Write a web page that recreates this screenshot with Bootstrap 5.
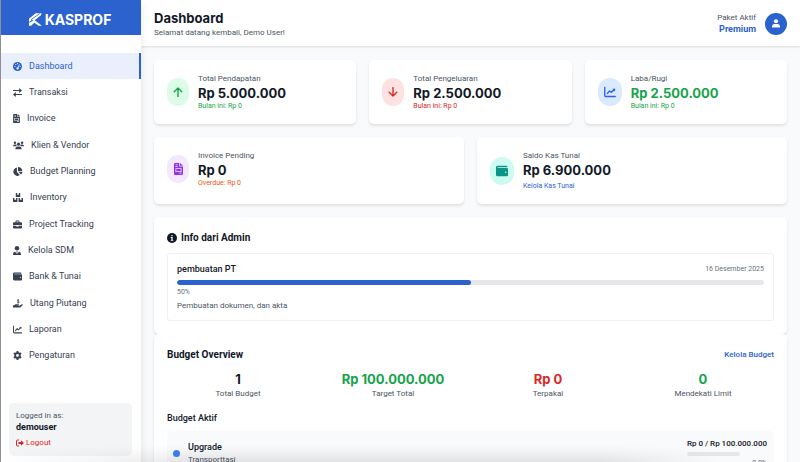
<!DOCTYPE html>
<html lang="id">
<head>
<meta charset="utf-8">
<meta name="viewport" content="width=device-width, initial-scale=1">
<title>KASPROF - Dashboard</title>
<link href="https://cdn.jsdelivr.net/npm/bootstrap@5.3.0/dist/css/bootstrap.min.css" rel="stylesheet">
<style>
:root{--brand:#2c62cd;--ink:#111827;--slate:#374151;--muted:#4b5563;--ok:#16a34a;--bad:#dc2626}
body{font-family:Roboto,"Liberation Sans",sans-serif;font-size:8px;line-height:11px;color:var(--ink);background:#f9fafb}
a{text-decoration:none;color:var(--brand)}
svg{display:block;fill:currentColor;flex:none}
.side{width:141px;border-left:1px solid #8d8f94;box-shadow:0 3px 8px rgba(0,0,0,.1);z-index:2}
.brand,.top h1,.num{font-family:Inter,"Liberation Sans",sans-serif}
.brand{height:35px;padding:4px 2px 0 0;background:var(--brand);color:#fff;font-size:14px;font-weight:700;gap:3px}
.menu{margin-top:18px;height:316px}
.menu li{flex:1 1 0;display:flex}
.menu a{display:flex;flex:1;align-items:center;gap:7px;padding-left:12px;font-size:9px;color:var(--slate);border-right:2px solid transparent}
.menu a.active{background:#eaf0fb;color:var(--brand);border-color:var(--brand)}
.userbox{margin:0 9px 6px 8px;padding:7px 7px 9px;background:#f3f4f6;border-radius:5px}
.userbox .who{font-size:9px;line-height:13px;font-weight:700}
.exit{border:0;background:none;padding:0;color:var(--bad);gap:2px;margin-top:4px;font-size:8px;line-height:9px}
.top{height:46px;padding:1px 13px 0;box-shadow:0 1px 2px rgba(0,0,0,.12)}
.top h1{font-size:13px;line-height:17px;font-weight:700}
.muted{color:var(--muted)}
.plan{font-size:9px;line-height:13px;font-weight:700;color:var(--brand)}
.avatar{width:22px;height:22px;background:var(--brand);color:#fff;border:0;padding:0}
.content{padding:14px 13px 0}
.stack{gap:13px}
.panel{background:#fff;border-radius:5px;padding:13px;box-shadow:0 2px 3px rgba(0,0,0,.1)}
.stat{flex:1 1 0}
.pair{gap:9px}
.bubble{width:22px;height:28px;border-radius:14px}
.bubble.wide{width:24px}
.num{font-size:13px;line-height:18px;font-weight:700}
.tiny{font-size:7px;line-height:9px}
.ok{color:var(--ok)}.bad{color:var(--bad)}.late{color:#ea580c}
.b-green{background:#dcfce7;color:var(--ok)}.b-red{background:#fee2e2;color:var(--bad)}
.b-blue{background:#dbeafe;color:#2563eb}.b-violet{background:#f3e8ff;color:#9333ea}.b-teal{background:#ccfbf1;color:#0d9488}
h2{font-size:10px;line-height:15px;font-weight:700;margin:0}
.note{border:1px solid #eff0f2;border-radius:3px;padding:9px}
.note h3{font-size:9px;line-height:13px;font-weight:500;margin:0}
.progress{--bs-progress-height:5px;--bs-progress-bg:#e5e7eb;--bs-progress-bar-bg:var(--brand);--bs-progress-border-radius:3px}
.gray{color:#6b7280}
.pct{margin-top:3px}
.sub{font-size:9px;line-height:13px;font-weight:500;margin:13px 0 6px}
.item{background:#f9fafb;border-radius:5px;padding:7px 7px 7px 6px}
.dot{width:7px;height:7px;background:#3b82f6}
.mini{width:53px;margin:3px 0;--bs-progress-height:4px}
.fade-edge{left:0;right:0;bottom:0;height:16px;z-index:3;pointer-events:none;background:linear-gradient(to bottom,rgba(0,0,0,0),rgba(0,0,0,.09));-webkit-mask-image:linear-gradient(to right,transparent,#000 25%,#000 75%,transparent 90%);mask-image:linear-gradient(to right,transparent,#000 25%,#000 75%,transparent 90%)}
</style>
<script src="https://cdn.jsdelivr.net/npm/bootstrap@5.3.0/dist/js/bootstrap.bundle.min.js"></script>
</head>
<body>
<svg width="0" height="0" class="position-absolute" aria-hidden="true">
<symbol id="doc" viewBox="0 0 12 16"><path fill-rule="evenodd" d="M1.500 0H7v4.500h5V14.500a1.500 1.500 0 0 1-1.500 1.500h-9A1.500 1.500 0 0 1 0 14.500v-13A1.500 1.500 0 0 1 1.500 0zM2 2v1h3V2zM2 4v1h3V4zM2 7v5h8V7zM3 8h6v3H3zM7 13v1h3v-1zM8 0l4 3.500H8z"/></symbol>
<symbol id="wallet" viewBox="0 0 16 16"><path fill-rule="evenodd" d="M2 1h12a1 1 0 0 1 1 1v1H2.500a.5.5 0 0 0 0 1H14.500A1.500 1.500 0 0 1 16 5.500v8a1.500 1.500 0 0 1-1.500 1.500H2a2 2 0 0 1-2-2V3a2 2 0 0 1 2-2zM13 8.500a1 1 0 1 0 0 2 1 1 0 0 0 0-2z"/></symbol>
<symbol id="chart" viewBox="0 0 16 16"><path d="M1 2v10.500a1.500 1.500 0 0 0 1.500 1.500H15M4.500 10l3-3.500 2 2L14 4.500" fill="none" stroke="currentColor" stroke-width="1.800" stroke-linecap="round" stroke-linejoin="round"/><path d="M11 3.500h3.800v3.800z"/></symbol>
</svg>
<div class="d-flex vh-100 overflow-hidden position-relative">
<aside class="side bg-white d-flex flex-column flex-shrink-0">
<div class="brand d-flex align-items-center justify-content-center">
<svg width="13" height="13" viewBox="0 0 39 39"><path d="M20 1H38L36 7 15 23 9 20 0 27V17zM0 38V29L16 21 39 38H29L16 29 6 38z"/><path d="M6 20L32 2" stroke="#2c62cd" stroke-width="2.500"/></svg>
<span>KASPROF</span>
</div>
<nav aria-label="Menu utama">
<ul class="menu list-unstyled d-flex flex-column mb-0">
<li><a href="#" class="active" aria-current="page"><svg width="9" height="9" viewBox="0 0 16 16"><circle cx="8" cy="8" r="8"/><g fill="#eaf0fb"><circle cx="3.500" cy="8" r="1.100"/><circle cx="5" cy="4.500" r="1.100"/><circle cx="8" cy="3" r="1.100"/><circle cx="12.600" cy="8" r="1.100"/><circle cx="8" cy="11.500" r="2"/><path d="M7.500 11L11 4l1 .5L9 12z"/></g></svg>Dashboard</a></li>
<li><a href="#"><svg width="9" height="9" viewBox="0 0 16 16"><path d="M0 3.500h11V0l5 4.500-5 4.500V5.500H0zM16 12.500H5V16l-5-4.500L5 7v3.500h11z"/></svg>Transaksi</a></li>
<li><a href="#"><svg width="7" height="9"><use href="#doc"/></svg>Invoice</a></li>
<li><a href="#"><svg width="11" height="9" viewBox="0 0 20 16"><circle cx="3.500" cy="3" r="2.200"/><circle cx="16.500" cy="3" r="2.200"/><circle cx="10" cy="5.500" r="2.900"/><path d="M0 9a3 3 0 0 1 3-3h2c.8 0 1 .3 1.200.5 0 1.500.4 2 1 3H0zM20 9a3 3 0 0 0-3-3h-2c-.8 0-1 .3-1.200.5 0 1.500-.4 2-1 3H20zM4 15a5 5 0 0 1 4-5h4a5 5 0 0 1 4 5z"/></svg>Klien &amp; Vendor</a></li>
<li><a href="#"><svg width="10" height="9" viewBox="0 0 18 16"><path d="M7 1v8l5.500 5.500A7.500 7.500 0 1 1 7 1zM9 0a7.500 7.500 0 0 1 7.500 7H9zM9.500 8.500H17a7.500 7.500 0 0 1-2.500 5z"/></svg>Budget Planning</a></li>
<li><a href="#"><svg width="10" height="9" viewBox="0 0 18 16"><path d="M5 0h2.500v3h3V0H13v7H5zM0 9h2.500v3h3V9H8v7H0zM10 9h2.500v3h3V9H18v7h-8z"/></svg>Inventory</a></li>
<li><a href="#"><svg width="9" height="9" viewBox="0 0 16 16"><path fill-rule="evenodd" d="M4.500 4V2.500A1.500 1.500 0 0 1 6 1h4a1.500 1.500 0 0 1 1.500 1.500V4h3A1.500 1.500 0 0 1 16 5.500V9H0V5.500A1.500 1.500 0 0 1 1.500 4zM6 4h4V2.500H6zM0 10h6v1.500h4V10h6v3.500a1.500 1.500 0 0 1-1.500 1.500h-13A1.500 1.500 0 0 1 0 13.500z"/></svg>Project Tracking</a></li>
<li><a href="#"><svg width="8" height="9" viewBox="0 0 14 16"><circle cx="7" cy="4" r="4"/><path d="M0 16v-2a4 4 0 0 1 4-4l2 4 .5-2L6 9.500h2L7.500 12l.5 2 2-4a4 4 0 0 1 4 4v2z"/></svg>Kelola SDM</a></li>
<li><a href="#"><svg width="9" height="9"><use href="#wallet"/></svg>Bank &amp; Tunai</a></li>
<li><a href="#"><svg width="10" height="9" viewBox="0 0 18 16"><path d="M0 11h2.500l2-1.500H10q1.500.8 0 2H7.500v.6h4L16 9.500q2-.4 1.700 1.200L13 15H0z"/><path d="M11 1.800C8 .6 7 2.800 9 3.700s3 1.200 1.500 2.700c-1 .8-2.500 0-3 0M9.200 0v8" fill="none" stroke="currentColor" stroke-width="1.300"/></svg>Utang Piutang</a></li>
<li><a href="#"><svg width="9" height="9"><use href="#chart"/></svg>Laporan</a></li>
<li><a href="#"><svg width="9" height="9" viewBox="0 0 16 16"><path fill-rule="evenodd" d="M6.500 0h3l.5 2.300 1.500.9L13.800 2.500l1.500 2.600L13.600 6.700v2.600l1.700 1.600-1.500 2.600-2.300-.7-1.500.9-.5 2.300h-3L6 13.700l-1.500-.9-2.300.7L.7 10.900l1.700-1.600V6.700L.7 5.100l1.500-2.600 2.300.7L6 2.300zM8 5.500a2.500 2.500 0 1 0 0 5 2.500 2.500 0 0 0 0-5z"/></svg>Pengaturan</a></li>
</ul>
</nav>
<div class="userbox mt-auto">
<div class="muted">Logged in as:</div>
<div class="who">demouser</div>
<button type="button" class="exit d-flex align-items-center"><svg width="8" height="8" viewBox="0 0 16 16"><path d="M6 2H3a2 2 0 0 0-2 2v8a2 2 0 0 0 2 2h3" fill="none" stroke="currentColor" stroke-width="2"/><path d="M5 6h5V2.500L16 8l-6 5.500V10H5z"/></svg>Logout</button>
</div>
</aside>
<div class="flex-grow-1 d-flex flex-column">
<header class="top bg-white d-flex align-items-center justify-content-between flex-shrink-0">
<div><h1 class="mb-0">Dashboard</h1><div class="muted">Selamat datang kembali, Demo User!</div></div>
<div class="d-flex align-items-center pair">
<div class="text-end"><div class="muted">Paket Aktif</div><div class="plan">Premium</div></div>
<button type="button" class="avatar rounded-circle d-flex align-items-center justify-content-center" aria-label="Profil"><svg width="8" height="9" viewBox="0 0 14 16"><circle cx="7" cy="4" r="3.700"/><path d="M0 15v-1.500A4.500 4.500 0 0 1 4.500 9h5a4.500 4.500 0 0 1 4.500 4.500V15z"/></svg></button>
</div>
</header>
<main class="content">
<div class="d-flex flex-column stack">
<div class="d-flex stack">
<section class="panel stat d-flex"><div class="d-flex align-items-center pair"><div class="bubble b-green d-flex align-items-center justify-content-center"><svg width="10" height="10" viewBox="0 0 16 16"><path d="M8 15V2M2 7.500L8 1.500l6 6" fill="none" stroke="currentColor" stroke-width="2.200" stroke-linecap="round" stroke-linejoin="round"/></svg></div><div><div class="muted">Total Pendapatan</div><div class="num">Rp 5.000.000</div><div class="tiny ok">Bulan ini: Rp 0</div></div></div></section>
<section class="panel stat d-flex"><div class="d-flex align-items-center pair"><div class="bubble b-red d-flex align-items-center justify-content-center"><svg width="10" height="10" viewBox="0 0 16 16"><path d="M8 1v13M2 8.500l6 6 6-6" fill="none" stroke="currentColor" stroke-width="2.200" stroke-linecap="round" stroke-linejoin="round"/></svg></div><div><div class="muted">Total Pengeluaran</div><div class="num">Rp 2.500.000</div><div class="tiny bad">Bulan ini: Rp 0</div></div></div></section>
<section class="panel stat d-flex"><div class="d-flex align-items-center pair"><div class="bubble wide b-blue d-flex align-items-center justify-content-center"><svg width="12" height="12"><use href="#chart"/></svg></div><div><div class="muted">Laba/Rugi</div><div class="num ok">Rp 2.500.000</div><div class="tiny ok">Bulan ini: Rp 0</div></div></div></section>
</div>
<div class="d-flex stack">
<section class="panel stat"><div class="d-flex align-items-center pair"><div class="bubble b-violet d-flex align-items-center justify-content-center"><svg width="9" height="12"><use href="#doc"/></svg></div><div><div class="muted">Invoice Pending</div><div class="num">Rp 0</div><div class="tiny late">Overdue: Rp 0</div></div></div></section>
<section class="panel stat"><div class="d-flex align-items-center pair"><div class="bubble wide b-teal d-flex align-items-center justify-content-center"><svg width="12" height="12"><use href="#wallet"/></svg></div><div><div class="muted">Saldo Kas Tunai</div><div class="num">Rp 6.900.000</div><a href="#" class="tiny d-block pct">Kelola Kas Tunai</a></div></div></section>
</div>
<div>
<section class="panel">
<h2 class="d-flex align-items-center gap-1 mb-2"><svg width="10" height="10" viewBox="0 0 16 16"><circle cx="8" cy="8" r="8"/><path d="M7 3h2v2.200H7zM6 6.500h3V11h1v1.500H6V11h1V8H6z" fill="#fff"/></svg>Info dari Admin</h2>
<div class="note">
<div class="d-flex align-items-center justify-content-between mb-1"><h3>pembuatan PT</h3><time class="tiny gray" datetime="2025-12-16">16 Desember 2025</time></div>
<div class="progress" role="progressbar" aria-label="pembuatan PT" aria-valuenow="50" aria-valuemin="0" aria-valuemax="100"><div class="progress-bar rounded-pill" style="width:50%"></div></div>
<div class="tiny gray pct">50%</div>
<div class="muted pct">Pembuatan dokumen, dan akta</div>
</div>
</section>
<section class="panel">
<div class="d-flex align-items-center justify-content-between mb-2"><h2>Budget Overview</h2><a href="#" class="fw-medium">Kelola Budget</a></div>
<div class="d-flex stack text-center">
<div class="stat"><div class="num">1</div><div class="muted">Total Budget</div></div>
<div class="stat"><div class="num ok">Rp 100.000.000</div><div class="muted">Target Total</div></div>
<div class="stat"><div class="num bad">Rp 0</div><div class="muted">Terpakai</div></div>
<div class="stat"><div class="num ok">0</div><div class="muted">Mendekati Limit</div></div>
</div>
<h3 class="sub">Budget Aktif</h3>
<div class="item d-flex align-items-center justify-content-between">
<div class="d-flex align-items-center gap-2"><span class="dot rounded-circle"></span><div><h3 class="sub m-0">Upgrade</h3><div class="muted">Transporttasi</div></div></div>
<div><div class="fw-medium">Rp 0 / Rp 100.000.000</div><div class="progress mini" role="progressbar" aria-label="Upgrade" aria-valuenow="0" aria-valuemin="0" aria-valuemax="100"><div class="progress-bar" style="width:0%"></div></div><div class="tiny gray text-end">0.0%</div></div>
</div>
</section>
</div>
</div>
</main>
</div>
<div class="fade-edge position-absolute"></div>
</div>
</body>
</html>
